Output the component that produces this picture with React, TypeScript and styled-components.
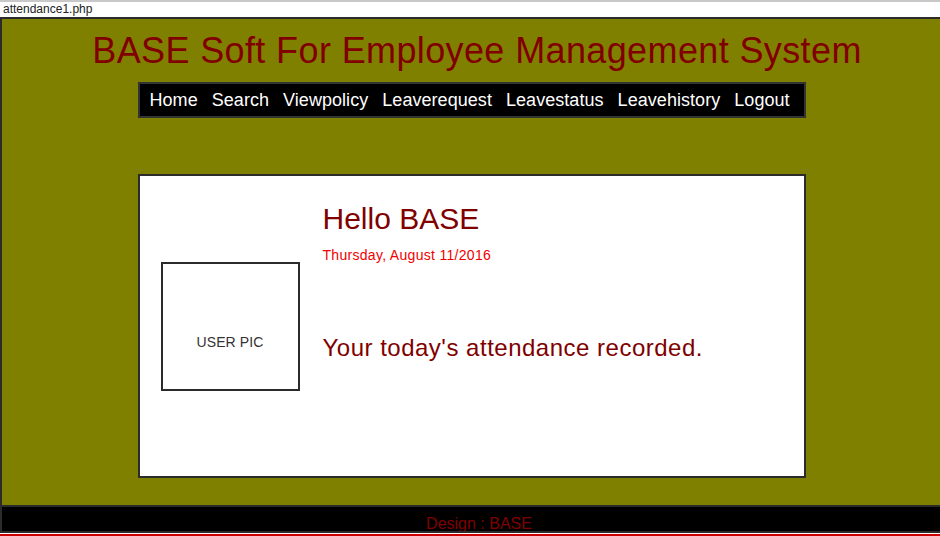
import styled, { createGlobalStyle } from "styled-components";

const GlobalStyle = createGlobalStyle`
  html, body {
    margin: 0;
    padding: 0;
    background: #ffffff;
    overflow: hidden;
  }
  body {
    font-family: "Liberation Sans", Arial, sans-serif;
  }
`;

const colors = {
  olive: "#808000",
  maroon: "#800000",
  red: "#f00000",
  border: "#2b2b2b",
};

const TabBar = styled.div`
  height: 15px;
  border-top: 2px solid #c8c8c8;
  padding-left: 3px;
  font-size: 12px;
  line-height: 15px;
  color: #222;
`;

const Page = styled.div`
  width: 958px;
  border: 2px solid ${colors.border};
  box-sizing: border-box;
  display: flex;
  flex-direction: column;
`;

const Main = styled.main`
  height: 486px;
  background-color: ${colors.olive};
  display: flex;
  flex-direction: column;
`;

const Title = styled.h1`
  margin: 11px 0 0;
  padding-right: 4px;
  font-size: 36px;
  font-weight: 400;
  line-height: 41px;
  letter-spacing: 0.38px;
  color: ${colors.maroon};
  text-align: center;
`;

const Column = styled.div`
  display: flex;
  flex-direction: column;
  align-items: center;
  padding-right: 15px;
`;

const Nav = styled.nav`
  width: 668px;
  height: 36px;
  margin-top: 11px;
  box-sizing: border-box;
  background: #000;
  border: 2px solid #333;
  display: flex;
  align-items: center;
  padding: 0 3px;
`;

const NavItem = styled.a`
  padding: 0 7px;
  color: #fff;
  font-size: 18px;
  line-height: 32px;
  letter-spacing: 0.05px;
  text-decoration: none;
`;

const Card = styled.section`
  width: 668px;
  height: 304px;
  margin-top: 56px;
  box-sizing: border-box;
  background: #fff;
  border: 2px solid ${colors.border};
  display: flex;
  padding: 0 21px;
  gap: 23px;
`;

const UserPic = styled.div`
  align-self: center;
  width: 139px;
  height: 129px;
  box-sizing: border-box;
  border: 2px solid ${colors.border};
  padding-top: 70px;
  text-align: center;
  font-size: 14px;
  line-height: 16px;
  letter-spacing: 0.1px;
  color: #333;
`;

const Info = styled.div`
  display: flex;
  flex-direction: column;
  padding-top: 26px;
`;

const Hello = styled.h2`
  margin: 0;
  font-size: 30px;
  font-weight: 400;
  line-height: 34px;
  color: ${colors.maroon};
`;

const DateText = styled.div`
  margin-top: 11px;
  font-size: 14px;
  line-height: 16px;
  letter-spacing: 0.3px;
  color: ${colors.red};
`;

const Message = styled.p`
  margin: 71px 0 0;
  font-size: 24px;
  line-height: 28px;
  letter-spacing: 0.5px;
  color: ${colors.maroon};
`;

const Footer = styled.footer`
  height: 16px;
  border-top: 2px solid ${colors.border};
  background: #000;
  overflow: hidden;
  padding-top: 8px;
  text-align: center;
  font-size: 16px;
  line-height: 18px;
  color: ${colors.maroon};
`;

const BottomRule = styled.div`
  margin-top: 1px;
  height: 2px;
  background: #cc0000;
`;

const links = [
  "Home",
  "Search",
  "Viewpolicy",
  "Leaverequest",
  "Leavestatus",
  "Leavehistory",
  "Logout",
];

function App() {
  return (
    <>
      <GlobalStyle />
      <TabBar>attendance1.php</TabBar>
      <Page>
        <Main>
          <Title>BASE Soft For Employee Management System</Title>
          <Column>
            <Nav>
              {links.map((l) => (
                <NavItem key={l} href="#">
                  {l}
                </NavItem>
              ))}
            </Nav>
            <Card>
              <UserPic>USER PIC</UserPic>
              <Info>
                <Hello>Hello BASE</Hello>
                <DateText>Thursday, August 11/2016</DateText>
                <Message>Your today's attendance recorded.</Message>
              </Info>
            </Card>
          </Column>
        </Main>
        <Footer>Design : BASE</Footer>
      </Page>
      <BottomRule />
    </>
  );
}

export default App;
